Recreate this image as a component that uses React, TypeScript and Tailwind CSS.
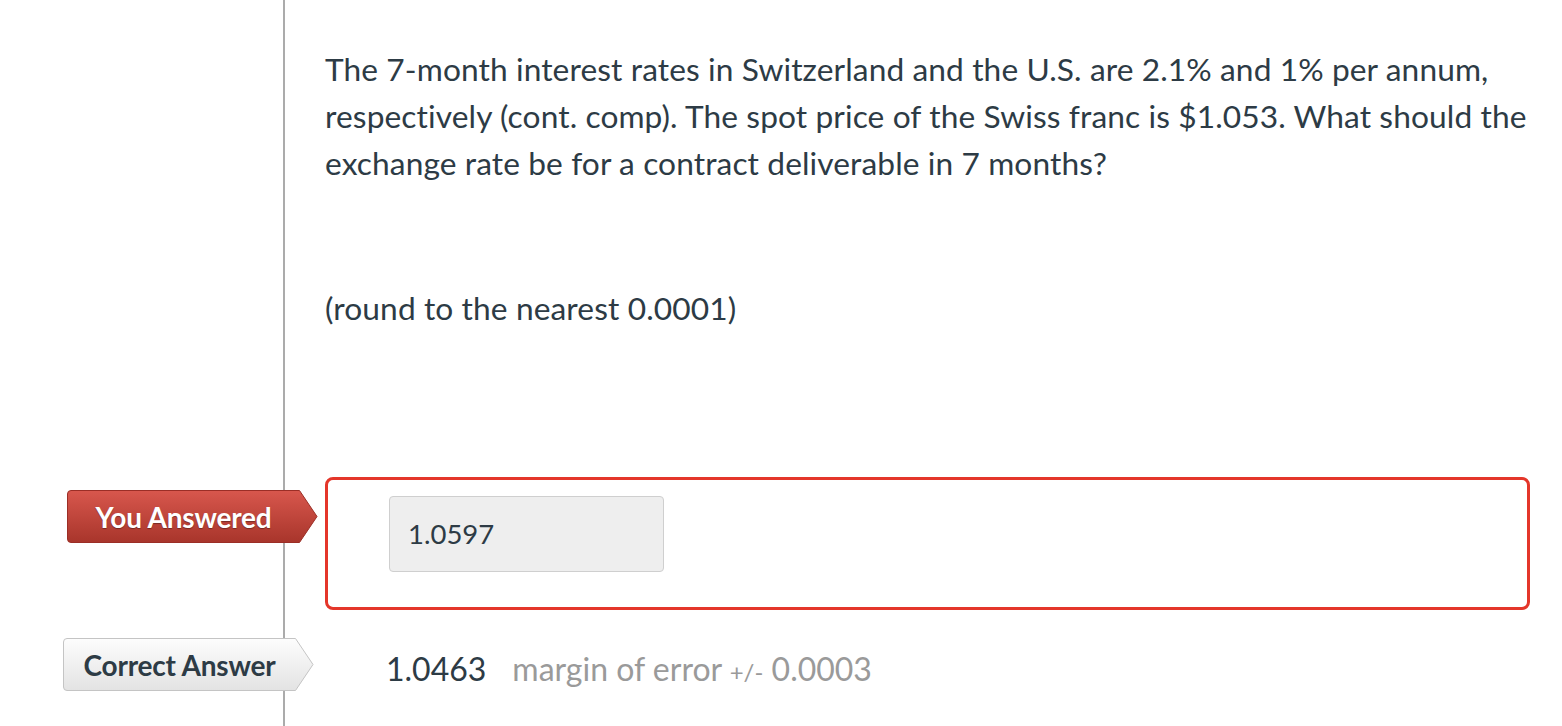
import React from "react";

function Badge({ label, variant }: { label: string; variant: "red" | "gray" }) {
  const red = variant === "red";
  const id = red ? "gradRed" : "gradGray";
  return (
    <div className="relative h-[53px] w-[251px]">
      <svg className="absolute inset-0" width="251" height="53" viewBox="0 0 251 53">
        <defs>
          <linearGradient id={id} x1="0" y1="0" x2="0" y2="1">
            {red ? (
              <>
                <stop offset="0" stopColor="#d8574d" />
                <stop offset="1" stopColor="#a8352b" />
              </>
            ) : (
              <>
                <stop offset="0" stopColor="#fdfdfd" />
                <stop offset="1" stopColor="#e3e3e3" />
              </>
            )}
          </linearGradient>
        </defs>
        <path
          d="M4 0.5 H232.5 L250 26.5 L232.5 52.5 H4 Q0.5 52.5 0.5 49 V4 Q0.5 0.5 4 0.5 Z"
          fill={`url(#${id})`}
          stroke={red ? "#9b2e26" : "#c4c4c4"}
          strokeWidth="1"
        />
      </svg>
      <div
        className={
          "relative flex h-full w-[233px] items-center justify-center text-[28px] font-bold tracking-[-0.2px] " +
          (red ? "text-white [text-shadow:0_1px_1px_rgba(0,0,0,0.35)]" : "text-[#2d3b45]")
        }
      >
        {label}
      </div>
    </div>
  );
}

export default function App() {
  return (
    <div
      className="flex min-h-[726px] w-full flex-col bg-white text-[#2d3b45]"
      style={{ fontFamily: "Lato, 'Open Sans', sans-serif" }}
    >
      {/* Question row */}
      <div className="flex">
        <div className="w-[285px] shrink-0 border-r-2 border-[#ababab]" />
        <div className="w-[1262px] pl-[40px] pt-[46px] text-[31.7px] leading-[47px] tracking-[0.1px]">
          <p>
            The 7-month interest rates in Switzerland and the U.S. are 2.1% and 1% per annum,
            respectively (cont. comp). The spot price of the Swiss franc is $1.053. What should the
            exchange rate be for a contract deliverable in 7 months?
          </p>
          <p className="mt-[98px]">(round to the nearest 0.0001)</p>
        </div>
      </div>

      {/* You answered row */}
      <div className="flex">
        <div className="w-[285px] shrink-0 border-r-2 border-[#ababab] pt-[145px]">
          <div className="relative z-10 mt-[13px] pl-[67px]">
            <Badge label="You Answered" variant="red" />
          </div>
        </div>
        <div className="flex-1 pl-[40px] pr-[32px] pt-[145px]">
          <div className="h-[133px] rounded-[8px] border-[3px] border-[#e4362a] pl-[61px] pt-[16px]">
            <div className="flex h-[76px] w-[275px] items-center rounded-[4px] border border-[#cfcfcf] bg-[#eeeeee] pl-[18px] text-[27.5px]">
              1.0597
            </div>
          </div>
        </div>
      </div>

      {/* Correct answer row */}
      <div className="flex flex-1">
        <div className="w-[285px] shrink-0 border-r-2 border-[#ababab] pt-[28px]">
          <div className="relative z-10 pl-[63px]">
            <Badge label="Correct Answer" variant="gray" />
          </div>
        </div>
        <div className="flex h-[109px] items-center pl-[101px] pt-[8px]">
          <span className="text-[32px]">1.0463</span>
          <span className="ml-[26px] text-[32px] text-[#9a9a9a]">
            margin of error <span className="text-[24px]">+/-</span> 0.0003
          </span>
        </div>
      </div>
    </div>
  );
}
